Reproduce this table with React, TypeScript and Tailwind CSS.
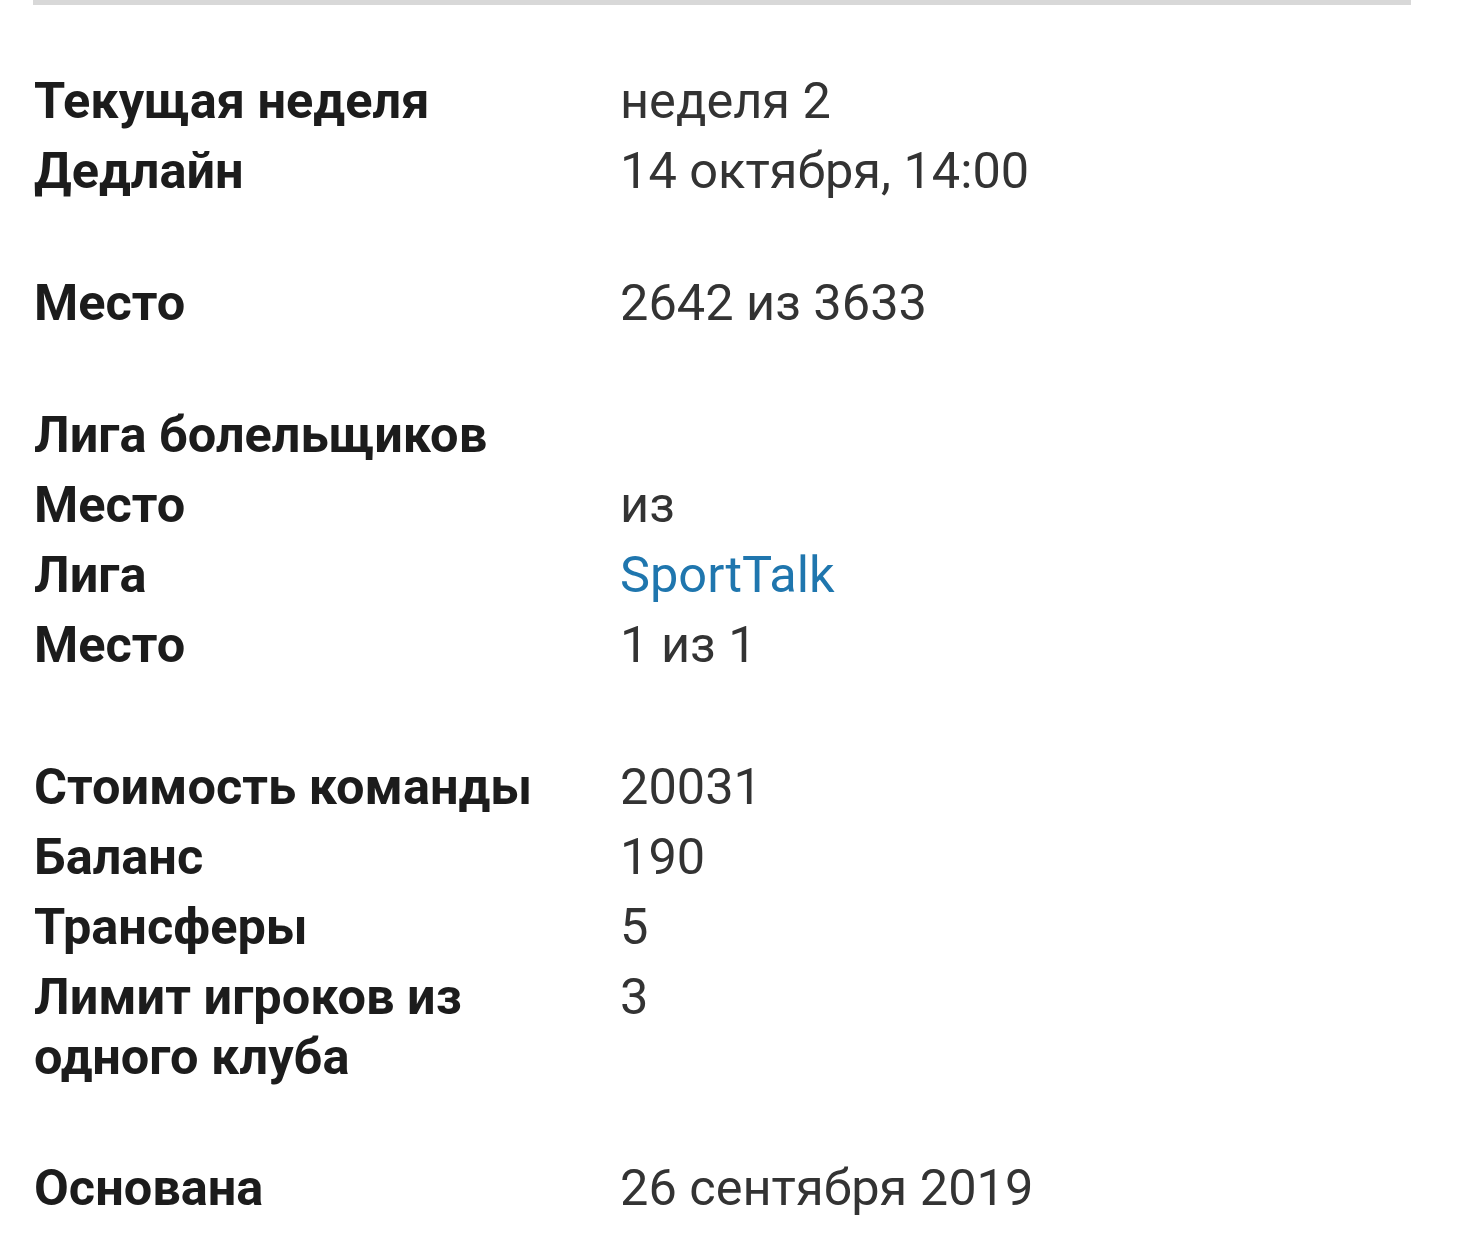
import React from 'react';

type Row = { label: string; value?: string; link?: boolean };

const groups: { rows: Row[]; gap: string }[] = [
  {
    gap: 'mt-0',
    rows: [
      { label: 'Текущая неделя', value: 'неделя 2' },
      { label: 'Дедлайн', value: '14 октября, 14:00' },
    ],
  },
  { gap: 'mt-[62px]', rows: [{ label: 'Место', value: '2642 из 3633' }] },
  {
    gap: 'mt-[62px]',
    rows: [
      { label: 'Лига болельщиков' },
      { label: 'Место', value: 'из' },
      { label: 'Лига', value: 'SportTalk', link: true },
      { label: 'Место', value: '1 из 1' },
    ],
  },
  {
    gap: 'mt-[72px]',
    rows: [
      { label: 'Стоимость команды', value: '20031' },
      { label: 'Баланс', value: '190' },
      { label: 'Трансферы', value: '5' },
      { label: 'Лимит игроков из одного клуба', value: '3' },
    ],
  },
  { gap: 'mt-[61px]', rows: [{ label: 'Основана', value: '26 сентября 2019' }] },
];

const App = () => {
  return (
    <div className="min-h-[1247px] w-[1460px] bg-white font-['Roboto',sans-serif]">
      {/* top bar */}
      <div className="ml-[33px] h-[5px] w-[1378px] bg-[#d8d8d8]" />

      <div className="mt-[61px] pl-[34px]">
        {groups.map((g, gi) => (
          <div key={gi} className={g.gap}>
            {g.rows.map((r, ri) => (
              <div key={ri} className="flex py-[5px] text-[50.5px] leading-[60px]">
                <div className="w-[586px] shrink-0 pr-[20px] font-bold text-[#1c1c1c]">{r.label}</div>
                <div className={r.link ? 'text-[#1f76ae]' : 'text-[#333333]'}>{r.value}</div>
              </div>
            ))}
          </div>
        ))}
      </div>
    </div>
  );
};

export default App;
